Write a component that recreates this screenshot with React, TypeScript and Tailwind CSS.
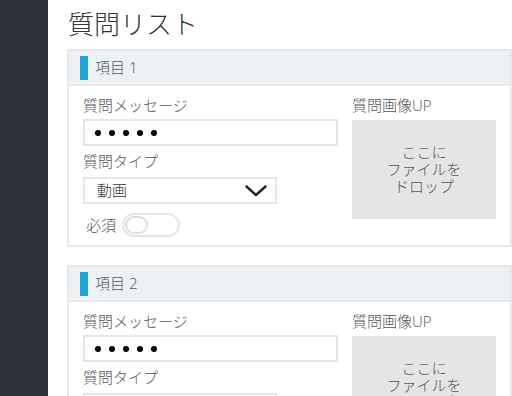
import React from "react";

const font = { fontFamily: "'Open Sans','Noto Sans CJK JP',sans-serif" };

function Chevron() {
  return (
    <svg width="22" height="12" viewBox="0 0 22 12" fill="none">
      <polyline points="1.5,1.5 11,10 20.5,1.5" stroke="#222" strokeWidth="2.4" strokeLinecap="round" strokeLinejoin="round" />
    </svg>
  );
}

function QuestionCard({ no }: { no: number }) {
  return (
    <section className="border-2 border-[#e6e8ea] bg-white">
      <div className="flex h-[35px] items-center bg-[#eef1f4] pl-[11px] border-b-2 border-[#e6e8ea]">
        <span className="block h-[24px] w-[8px] bg-[#1ea5d6]" />
        <span className="ml-[7px] text-[15px] font-light text-[#555]">項目 {no}</span>
      </div>
      <div className="flex gap-[14px] px-[14px] pt-[8px] pb-[8px]">
        <div className="w-[255px]">
          <div className="h-[22px] text-[15px] leading-[22px] font-extralight text-[#555]">質問メッセージ</div>
          <div className="mt-[3px] flex h-[27px] items-center gap-[8px] border-2 border-[#e6e6e6] pl-[10px]">
            {[0, 1, 2, 3, 4].map((i) => (
              <span key={i} className="block h-[6px] w-[6px] rounded-full bg-black" />
            ))}
          </div>
          <div className="mt-[4px] h-[22px] text-[15px] leading-[22px] font-extralight text-[#555]">質問タイプ</div>
          <div className="mt-[5px] flex h-[27px] w-[194px] items-center justify-between border-2 border-[#e6e6e6] pl-[12px] pr-[8px]">
            <span className="text-[15px] font-extralight text-[#333]">動画</span>
            <Chevron />
          </div>
          <div className="mt-[9px] flex items-center gap-[6px]">
            <span className="pl-[3px] text-[15px] font-extralight text-[#555]">必須</span>
            <span className="flex h-[24px] w-[58px] items-center rounded-full border-2 border-[#e6e6e6] pl-[1px]">
              <span className="block h-[18px] w-[23px] rounded-full border-2 border-[#dedede] bg-white" />
            </span>
          </div>
        </div>
        <div className="w-[144px]">
          <div className="h-[22px] text-[15px] leading-[22px] font-extralight text-[#555]">質問画像UP</div>
          <div className="mt-[4px] flex h-[99px] items-center justify-center bg-[#e4e5e7] text-center text-[15px] leading-[17px] font-extralight text-[#555]">
            <div>
              ここに
              <br />
              ファイルを
              <br />
              ドロップ
            </div>
          </div>
        </div>
      </div>
    </section>
  );
}

export default function App() {
  return (
    <div className="flex h-[396px] w-[512px] overflow-hidden bg-white" style={font}>
      <aside className="w-[48px] shrink-0 bg-[#2d3139]" />
      <main className="flex-1 pl-[19px] pr-[1px]">
        <h1 className="mt-[6px] h-[43px] pl-[1px] text-[26px] leading-[36px] font-extralight text-[#333]">質問リスト</h1>
        <div className="flex flex-col gap-[18px]">
          <QuestionCard no={1} />
          <QuestionCard no={2} />
        </div>
      </main>
    </div>
  );
}
